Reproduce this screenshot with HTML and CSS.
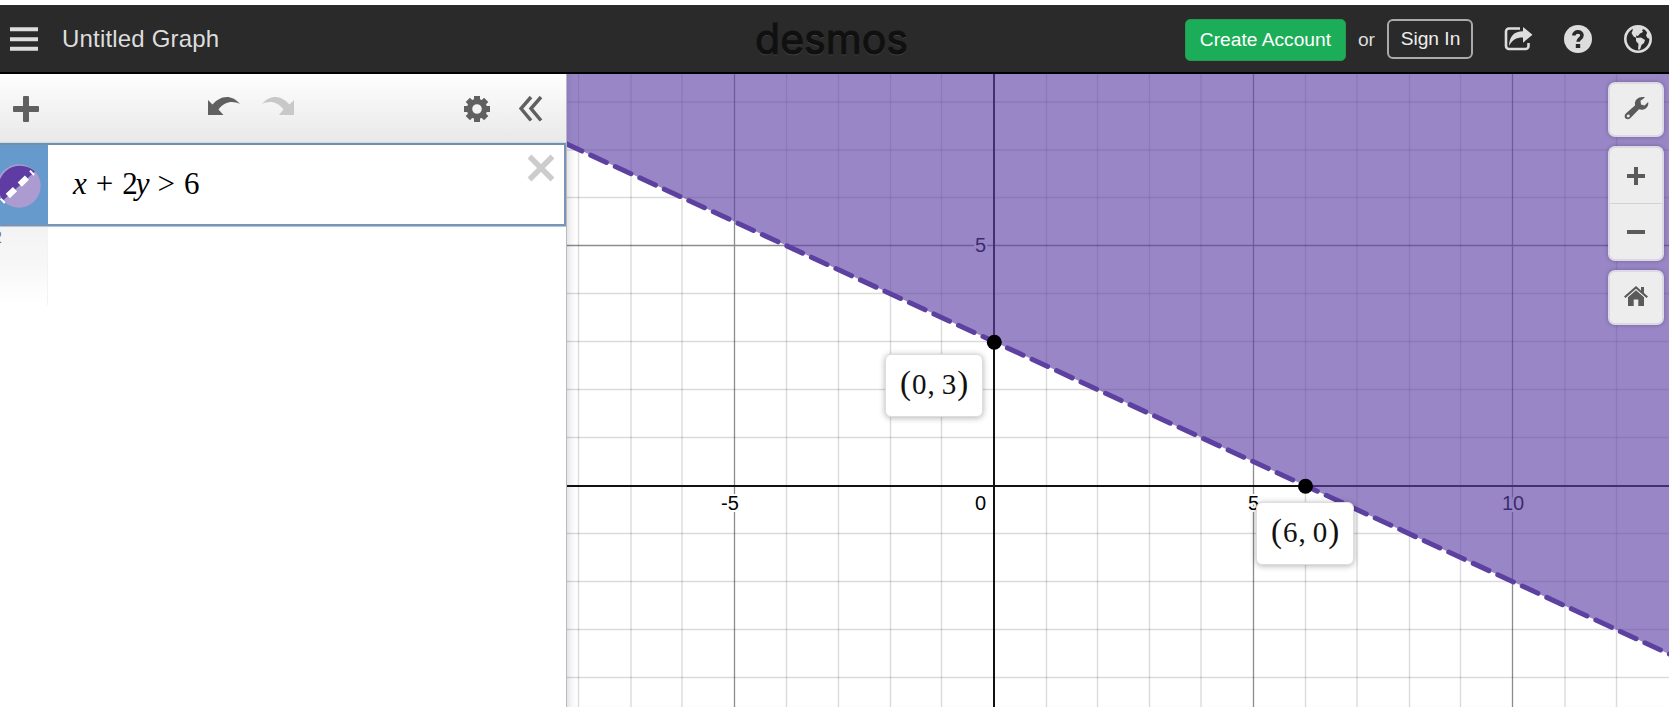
FILE: index.html
```html
<!DOCTYPE html>
<html lang="en">
<head>
    <meta charset="UTF-8">
    <meta name="viewport" content="width=device-width, initial-scale=1.0">
    <title>Untitled Graph</title>
    <link rel="stylesheet" href="styles.css">
</head>
<body>
    <header class="header">
        <div class="header-left">
            <svg class="menu-icon" width="28" height="24" viewBox="0 0 28 24">
                <path d="M0 2.2h28M0 12.2h28M0 21.8h28"/>
            </svg>
            <span class="graph-title">Untitled Graph</span>
        </div>
        <svg class="logo" width="156" height="56" viewBox="0 0 156 56">
            <text class="logo-shade" x="1" y="44" textLength="153" lengthAdjust="spacingAndGlyphs">desmos</text>
            <text class="logo-text" x="1" y="42.5" textLength="153" lengthAdjust="spacingAndGlyphs">desmos</text>
        </svg>
        <div class="header-right">
            <button class="create-account">Create Account</button>
            <span class="or">or</span>
            <button class="sign-in">Sign In</button>
            <svg class="header-icon" width="30" height="30" viewBox="0 0 30 30">
                <path class="line" d="M17 4.500H6a3 3 0 0 0-3 3V22a3 3 0 0 0 3 3H22.500a3 3 0 0 0 3-3v-3"/>
                <path d="M6 22C6.500 12 11 7.500 20 7.300V3l9.500 7.700-9.500 8v-5.200C13 13.500 9 16 6 22z"/>
            </svg>
            <svg class="header-icon" width="30" height="30" viewBox="0 0 30 30">
                <circle cx="15" cy="15" r="14"/>
                <path class="mark" d="M10.800 11.500C10.800 6.800 19 6.700 19 11.300c0 3.400-4 3.200-4 6.500"/>
                <rect class="mark-dot" x="12.800" y="20" width="4.400" height="4"/>
            </svg>
            <svg class="header-icon" width="30" height="30" viewBox="0 0 30 30">
                <circle class="ring" cx="15" cy="15" r="12.700"/>
                <path d="M10 3.500L15 2.500h5l1 2.500-2 1 1 2-3 1.500-2 2.500-2-.5.500 2.500-3-1.500-2-3.500 1-2z"/>
                <path d="M13 14l5-.5 4 2.500-1 3-2.500 2-1.500 4.500h-2l.5-5.500-2.500-3z"/>
                <path d="M23.500 6l3 4 .5 5-2.500-1-1.500-2.500 1-2.500z"/>
            </svg>
        </div>
    </header>

    <main class="main">
        <section class="panel">
            <div class="toolbar">
                <svg class="tool-icon add" width="26" height="26" viewBox="0 0 26 26">
                    <path d="M10 1q0-1 1-1h4q1 0 1 1v9h9q1 0 1 1v4q0 1-1 1h-9v9q0 1-1 1h-4q-1 0-1-1v-9H1q-1 0-1-1v-4q0-1 1-1h9z"/>
                </svg>
                <svg class="tool-icon undo" width="32" height="18" viewBox="0 0 32 18">
                    <path d="M0 3l4.500 4.500C11 0 22-4.500 32 7 24 3.500 17 4.500 10.500 12.500L15.500 18H0z"/>
                </svg>
                <svg class="tool-icon redo" width="32" height="18" viewBox="0 0 32 18">
                    <path d="M32 3l-4.500 4.500C21 0 10-4.500 0 7 8 3.500 15 4.500 21.500 12.500L17 18H32z"/>
                </svg>
                <svg class="tool-icon gear" width="26" height="26" viewBox="-13 -13 26 26">
                    <circle class="gear-body" r="7.500"/>
                    <g>
                        <rect x="-3" y="-13" width="6" height="5"/>
                        <rect x="-3" y="-13" width="6" height="5" transform="rotate(45)"/>
                        <rect x="-3" y="-13" width="6" height="5" transform="rotate(90)"/>
                        <rect x="-3" y="-13" width="6" height="5" transform="rotate(135)"/>
                        <rect x="-3" y="-13" width="6" height="5" transform="rotate(180)"/>
                        <rect x="-3" y="-13" width="6" height="5" transform="rotate(225)"/>
                        <rect x="-3" y="-13" width="6" height="5" transform="rotate(270)"/>
                        <rect x="-3" y="-13" width="6" height="5" transform="rotate(315)"/>
                    </g>
                </svg>
                <svg class="tool-icon collapse" width="24" height="26" viewBox="0 0 24 26">
                    <path d="M12 1L2 12.500l10 12M22 1L12 12.500l10 12"/>
                </svg>
            </div>

            <div class="expression">
                <div class="tab">
                    <svg width="41" height="44" viewBox="0 0 41 44">
                        <circle class="swatch-light" cx="19" cy="22" r="21.700"/>
                        <path class="swatch-dark" d="M3 36.600A21.700 21.700 0 0 1 35 7.500z"/>
                        <path class="swatch-line" d="M2 37.500L35 6"/>
                    </svg>
                </div>
                <div class="math"><i>x</i><span class="plus">+</span>2<i class="var-y">y</i><span class="gt">&gt;</span>6</div>
                <svg class="close" width="28" height="28" viewBox="0 0 28 28">
                    <path d="M2.500 2.500l23 23M25.500 2.500l-23 23"/>
                </svg>
            </div>

            <div class="next-row">
                <div class="next-tab"><span class="row-number">2</span></div>
            </div>
        </section>

        <section class="graph">
            <svg class="plot" width="1102" height="633" viewBox="567 74 1102 633">
                <path class="minor" d="M578.500 74v633M631 74v633M682 74v633M786.500 74v633M838.500 74v633M890.500 74v633M941.500 74v633M1046.500 74v633M1097.500 74v633M1149.500 74v633M1201 74v633M1305.500 74v633M1357 74v633M1409.500 74v633M1460.500 74v633M1565 74v633M1616.500 74v633"/>
                <path class="minor" d="M567 102h1102M567 150h1102M567 197.500h1102M567 293.500h1102M567 341.500h1102M567 389.500h1102M567 437.500h1102M567 533.500h1102M567 581.500h1102M567 629.500h1102M567 677.500h1102"/>
                <path class="major" d="M734.500 74v633M1253.500 74v633M1512.500 74v633M567 245.500h1102"/>
                <path class="axis" d="M994 74v633M567 486h1102"/>
                <g class="labels">
                    <text x="721" y="510">-5</text>
                    <text x="975" y="510">0</text>
                    <text x="1248" y="510">5</text>
                    <text x="1502" y="510">10</text>
                    <text x="975" y="252">5</text>
                </g>
                <path class="shade" d="M567 74H1669V654L567 144z"/>
                <path class="boundary" d="M566.200 143.800L1675 656.700"/>
                <circle class="point" cx="994.300" cy="342.300" r="7.500"/>
                <circle class="point" cx="1305.500" cy="486.300" r="7.500"/>
            </svg>

            <div class="tooltip y-intercept"><span class="paren">(</span>0<span class="comma">,</span>3<span class="paren">)</span></div>
            <div class="tooltip x-intercept"><span class="paren">(</span>6<span class="comma">,</span>0<span class="paren">)</span></div>

            <div class="graph-controls">
                <button class="control">
                    <svg class="wrench" width="26" height="26" viewBox="0 0 26 26">
                        <path fill-rule="evenodd" d="M22 2.500l-4.500 3.200.5 3.800 3.500 1 3.700-3.500c.8 5.500-4.200 9-9.200 7.200L7.500 23c-3.500 3.500-8-1-4.700-4.400l9.400-8.300C10.500 5 16.500.500 22 2.500zM5.200 19.500a1.500 1.500 0 1 0 .1 3 1.500 1.500 0 0 0-.1-3z"/>
                    </svg>
                </button>
                <div class="zoom">
                    <button class="control">
                        <svg width="18" height="18" viewBox="0 0 18 18"><path d="M7 0h4v7h7v4h-7v7H7v-7H0V7h7z"/></svg>
                    </button>
                    <button class="control">
                        <svg width="18" height="18" viewBox="0 0 18 18"><path d="M0 7h18v4H0z"/></svg>
                    </button>
                </div>
                <button class="control">
                    <svg class="home" width="24" height="20" viewBox="0 0 24 20">
                        <path d="M12 0l5 4.500V1h3v6l4 3.500-1.500 1.500L12 2.800 1.500 12 0 10.500z"/>
                        <path d="M12 4.300l8 7V20h-5.700v-6.500H9.700V20H4v-8.700z"/>
                    </svg>
                </button>
            </div>
        </section>
    </main>
</body>
</html>
```
FILE: styles.css
```css
body {
    font-family: Arial, "Liberation Sans", sans-serif;
    margin: 0;
    padding-top: 5px;
    height: 702px;
    background: white;
    overflow: hidden;
}

button {
    font-family: inherit;
    padding: 0;
    cursor: pointer;
}

svg {
    display: block;
    flex-shrink: 0;
}

.header {
    display: grid;
    grid-template-columns: 1fr 156px 1fr;
    height: 67px;
    background: #2a2a2a;
    border-bottom: 2px solid #000;
    color: #ddd;
}

.header-left {
    display: flex;
    align-items: center;
    padding: 0 0 0 10px;
    gap: 24px;
}

.menu-icon {
    stroke: #ddd;
    stroke-width: 4;
}

.graph-title {
    font-size: 24px;
    line-height: 28px;
    letter-spacing: 0.18px;
}

.logo {
    margin-top: 6px;
    margin-left: -3px;
    font-family: Inter, sans-serif;
    font-weight: 400;
    font-size: 42px;
    overflow: visible;
}

.logo-text {
    fill: #101010;
    stroke: #101010;
    stroke-width: 1.2;
}

.logo-shade {
    fill: #4a4a4a;
    stroke: #4a4a4a;
    stroke-width: 0.6;
}

.header-right {
    display: flex;
    align-items: center;
    justify-content: flex-end;
    padding: 0 16px 0 0;
}

.create-account {
    width: 161px;
    height: 42px;
    margin-top: 2px;
    border: 1px solid #2d9554;
    border-radius: 5px;
    background: #1bad57;
    color: #fff;
    font-size: 19.2px;
}

.or {
    margin: 2px 12px 0;
    font-size: 19.2px;
}

.sign-in {
    width: 86px;
    height: 40px;
    margin-right: 30px;
    border: 2px solid #aaa;
    border-radius: 6px;
    background: transparent;
    color: #eee;
    font-size: 19.2px;
    padding: 1px 0 0 1px;
}

.header-icon {
    fill: #ddd;
    margin-left: 30px;
}

.sign-in + .header-icon {
    margin-left: 0;
}

.header-icon .line,
.header-icon .ring {
    fill: none;
    stroke: #ddd;
    stroke-width: 2.6;
}

.header-icon .mark {
    fill: none;
    stroke: #2a2a2a;
    stroke-width: 3.6;
}

.header-icon .mark-dot {
    fill: #2a2a2a;
}

.main {
    display: flex;
    height: 633px;
}

.panel {
    width: 566px;
    flex-shrink: 0;
    border-right: 1px solid #b8b8c4;
    background: #fff;
}

.toolbar {
    display: flex;
    align-items: center;
    height: 69px;
    box-sizing: border-box;
    padding: 0 23px 0 13px;
    background: linear-gradient(#fefefe, #e8e8e8);
}

.tool-icon {
    fill: #606060;
}

.undo {
    margin: -5px 22px 0 169px;
}

.redo {
    fill: #c8c8c8;
    margin-top: -5px;
}

.gear {
    margin-left: auto;
}

.gear-body {
    fill: none;
    stroke: #606060;
    stroke-width: 5.4;
}

.collapse {
    margin-left: 29px;
    fill: none;
    stroke: #606060;
    stroke-width: 3.5;
}

.expression {
    display: flex;
    height: 83px;
    box-sizing: border-box;
    border: 2px solid #7895b8;
    border-left: none;
    border-top-color: #7390ab;
    box-shadow: 0 1px #b4c5db, 0 -1px #cfdbe5;
}

.tab {
    display: flex;
    align-items: center;
    width: 48px;
    background: #6699cc;
    padding-top: 3px;
    box-sizing: border-box;
}

.swatch-light {
    fill: #ab9bd0;
}

.swatch-dark {
    fill: #5f3ca4;
}

.swatch-line {
    stroke: #fff;
    stroke-width: 6;
    stroke-dasharray: 2 6 10 6.500 10 6;
}

.math {
    flex: 1;
    padding-left: 25px;
    font-family: "Liberation Serif", serif;
    font-size: 31px;
    line-height: 77px;
    color: #000;
}

.plus {
    margin: 0 9px;
}

.var-y {
    margin-left: -2px;
}

.gt {
    margin: 0 9px 0 8px;
}

.close {
    margin: 9px 9px 0 0;
    stroke: #ccc;
    stroke-width: 5.5;
}

.next-row {
    display: flex;
}

.next-tab {
    width: 47px;
    height: 78px;
    margin-top: 1px;
    border-right: 1px solid #f3f3f3;
    background: linear-gradient(#f3f3f3, #f7f7f7 45%, #fff);
    overflow: hidden;
}

.row-number {
    display: block;
    margin: 1px 0 0 -7px;
    font-size: 16px;
    line-height: 20px;
    color: #777;
}

.graph {
    position: relative;
    flex: 1;
    box-shadow: inset 8px 0 8px -6px rgba(0,0,0,0.15);
}

.minor {
    stroke: rgba(0,0,0,0.14);
    stroke-width: 1.4;
}

.major {
    stroke: rgba(0,0,0,0.45);
    stroke-width: 1.3;
}

.axis {
    stroke: #111;
    stroke-width: 2;
}

.labels {
    font-size: 20px;
    stroke: #fff;
    stroke-width: 4px;
    paint-order: stroke;
}

.shade {
    fill: #6042a6;
    fill-opacity: 0.64;
}

.boundary {
    stroke: #5d41a0;
    stroke-width: 5;
    stroke-linecap: round;
    stroke-dasharray: 17.300 9.710;
}

.tooltip {
    position: absolute;
    width: 98px;
    height: 63px;
    box-sizing: border-box;
    border: 1px solid #ddd;
    border-radius: 6px;
    background: #fff;
    box-shadow: 0 1px 6px rgba(0,0,0,0.3);
    font-family: "Liberation Serif", serif;
    font-size: 29px;
    line-height: 56px;
    text-align: center;
    color: #111;
}

.y-intercept {
    left: 318px;
    top: 280px;
}

.x-intercept {
    left: 689px;
    top: 428px;
}

.paren {
    font-size: 33px;
    margin: 0 1px;
}

.comma {
    margin: 0 7px 0 1px;
}

.graph-controls {
    position: absolute;
    top: 8px;
    right: 5px;
    display: flex;
    flex-direction: column;
    gap: 9px;
}

.control {
    display: flex;
    align-items: center;
    justify-content: center;
    width: 56px;
    height: 55px;
    box-sizing: border-box;
    border: 2px solid #dcd8e6;
    border-radius: 7px;
    background: #ededed;
    box-shadow: 0 0 4px rgba(0,0,0,0.25);
    fill: #5a5a5a;
}

.wrench {
    margin-top: -4px;
}

.home {
    margin-top: -3px;
}

.zoom {
    border: 2px solid #dcd8e6;
    border-radius: 7px;
    background: #ededed;
    box-shadow: 0 0 4px rgba(0,0,0,0.25);
}

.zoom .control {
    width: 52px;
    border: none;
    box-shadow: none;
    background: none;
}

.zoom .control + .control {
    height: 56px;
    border-top: 1px solid #d2d2d2;
    border-radius: 0;
}
```
